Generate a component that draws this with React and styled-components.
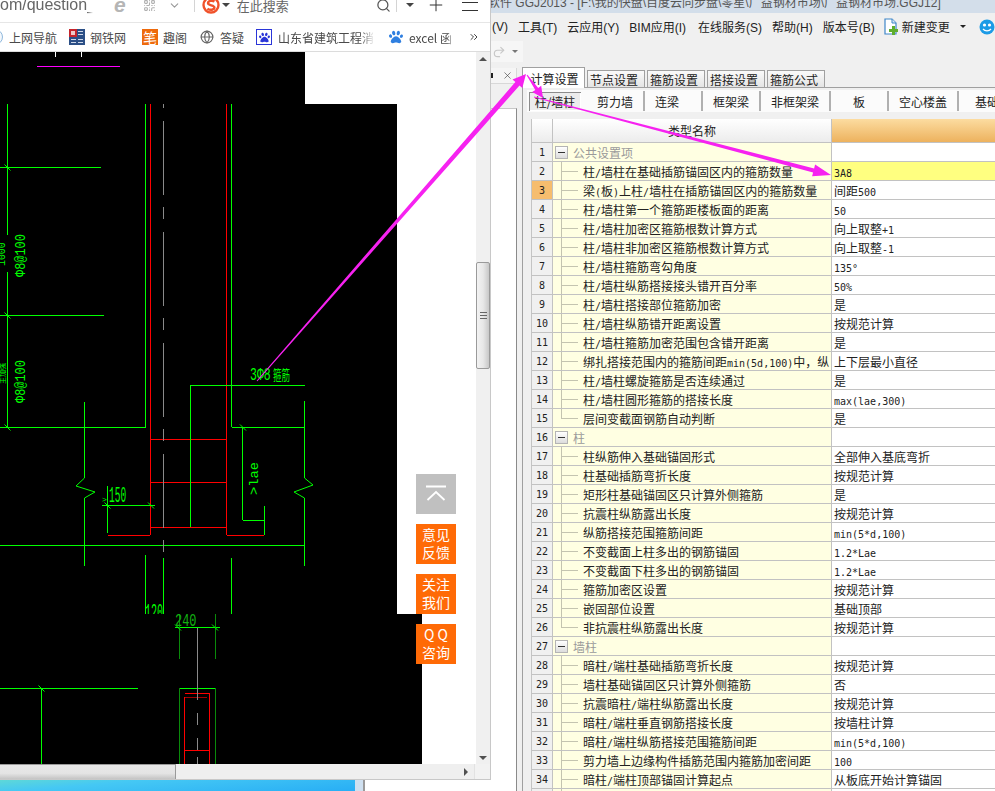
import React from "react";
import styled, { createGlobalStyle } from "styled-components";
import { ChevronDown, QrCode, Search, Plus, Globe, X, ChevronsRight, Redo2 } from "lucide-react";
import { FaPaw } from "react-icons/fa";

const Global = createGlobalStyle`
  html, body { margin: 0; padding: 0; background: #fff; }
  * { box-sizing: border-box; }
`;

const CJK = `"Noto Sans CJK SC", "Liberation Sans", sans-serif`;
const UI = `"Liberation Sans", "Noto Sans CJK SC", sans-serif`;

const Page = styled.div`
  position: relative;
  width: 995px;
  height: 791px;
  overflow: hidden;
  display: flex;
  font-family: ${CJK};
  font-size: 12px;
  color: #222;
`;

/* ---------- browser window ---------- */
const LeftColumn = styled.div`
  width: 491px;
  flex: none;
  display: flex;
  flex-direction: column;
`;
const BrowserWindow = styled.div`
  height: 780px;
  flex: none;
  display: flex;
  flex-direction: column;
  background: #fff;
  border-right: 1px solid #c8c8c8;
  border-bottom: 1px solid #c8c8c8;
`;
const AddressBar = styled.div`
  height: 23px;
  flex: none;
  display: flex;
  align-items: center;
  padding-bottom: 12px;
  border-bottom: 1px solid #e6e6e6;
  overflow: hidden;
  color: #666;
`;
const Url = styled.div`
  width: 93px;
  flex: none;
  font-family: ${UI};
  font-size: 16px;
  white-space: nowrap;
  overflow: hidden;
  color: #666;
  mask-image: linear-gradient(90deg, #000 94%, transparent);
`;
const Slot = styled.div`
  flex: none;
  display: flex;
  align-items: center;
  margin-left: ${(p) => p.$ml}px;
`;
const IeGlyph = styled.span`
  font-family: ${UI};
  font-weight: bold;
  font-style: italic;
  font-size: 21px;
  line-height: 12px;
  color: #b5b5b5;
`;
const BarDivider = styled.div`
  width: 1px;
  height: 14px;
  flex: none;
  background: #d4d4d4;
  margin-left: ${(p) => p.$ml}px;
`;
const Caret = styled.div`
  width: 0;
  height: 0;
  flex: none;
  margin-left: ${(p) => p.$ml}px;
  border-left: 4px solid transparent;
  border-right: 4px solid transparent;
  border-top: 4px solid #444;
`;
const SearchText = styled.div`
  flex: none;
  margin-left: ${(p) => p.$ml}px;
  font-size: 13px;
  color: #666;
  white-space: nowrap;
`;
const Hamburger = styled.div`
  width: 16px;
  height: 9px;
  flex: none;
  margin-left: ${(p) => p.$ml}px;
  margin-top: 2px;
  border-top: 1px solid #333;
  border-bottom: 1px solid #333;
`;
const Bookmarks = styled.div`
  height: 29px;
  flex: none;
  display: flex;
  align-items: center;
  border-bottom: 1px solid #dcdcdc;
  overflow: hidden;
  color: #444;
`;
const Mark = styled.span`
  flex: none;
  margin-left: ${(p) => p.$ml}px;
  width: ${(p) => p.$w}px;
  font-size: 12px;
  white-space: nowrap;
  overflow: hidden;
  color: #4a4a4a;
  ${(p) => p.$fade && "mask-image: linear-gradient(90deg, #000 85%, transparent);"}
`;
const BlockIcon = styled.div`
  width: 16px;
  height: 16px;
  flex: none;
  margin-left: ${(p) => p.$ml}px;
  display: flex;
  align-items: center;
  justify-content: center;
  color: #fff;
  font-size: 14px;
  line-height: 16px;
  background: ${(p) => p.$bg};
  border: ${(p) => p.$border || "none"};
`;
const ViewRow = styled.div`
  flex: 1;
  min-height: 0;
  display: flex;
`;
const Viewport = styled.div`
  position: relative;
  flex: 1;
  background: #fff;
  overflow: hidden;
`;
const DrawingSvg = styled.svg`
  display: block;
`;
const FloatColumn = styled.div`
  position: absolute;
  left: 416px;
  top: 422px;
  width: 40px;
  display: flex;
  flex-direction: column;
  gap: 10px;
`;
const FloatTop = styled.div`
  height: 40px;
  background: #c0c0c0;
  display: flex;
  align-items: center;
  justify-content: center;
`;
const FloatButton = styled.div`
  height: 40px;
  background: #ff6a06;
  color: #fff;
  font-size: 14px;
  line-height: 18px;
  text-align: center;
  padding-top: 1px;
`;
const VScroll = styled.div`
  width: 14px;
  flex: none;
  display: flex;
  flex-direction: column;
  align-items: stretch;
  background: #f0f0f0;
`;
const ScrollArrowBox = styled.div`
  height: 13px;
  flex: none;
  display: flex;
  align-items: center;
  justify-content: center;
`;
const TriUp = styled.div`
  border-left: 4px solid transparent;
  border-right: 4px solid transparent;
  border-bottom: 4px solid #505050;
`;
const TriDown = styled.div`
  border-left: 4px solid transparent;
  border-right: 4px solid transparent;
  border-top: 4px solid #505050;
`;
const TriRight = styled.div`
  border-top: 4px solid transparent;
  border-bottom: 4px solid transparent;
  border-left: 4px solid #505050;
`;
const VTrack = styled.div`
  flex: 1;
  padding-top: 197px;
`;
const VThumb = styled.div`
  height: 107px;
  border: 1px solid #9a9a9a;
  border-radius: 2px;
  background: linear-gradient(90deg, #f2f2f2, #e8e8e8 50%, #c8c8c8);
  display: flex;
  align-items: center;
  justify-content: center;
`;
const Grip = styled.div`
  width: 7px;
  height: 7px;
  border-top: 1px solid #666;
  border-bottom: 1px solid #666;
  background: linear-gradient(#666, #666) 0 50% / 100% 1px no-repeat;
`;
const HScroll = styled.div`
  height: 15px;
  flex: none;
  display: flex;
  align-items: center;
  background: #efefef;
`;
const HThumb = styled.div`
  width: 176px;
  height: 15px;
  flex: none;
  border-top: 1px solid #9a9a9a;
  border-right: 1px solid #9a9a9a;
  background: linear-gradient(#e8e8e8, #e4e4e4 60%, #c4c4c4);
`;
const HTrack = styled.div`
  flex: 1;
  display: flex;
  justify-content: flex-end;
  padding-right: 6px;
`;
const HCorner = styled.div`
  width: 16px;
  height: 15px;
  flex: none;
  background: #f2f2f2;
  border-left: 1px solid #e2e2e2;
`;
const DesktopStrip = styled.div`
  flex: 1;
  display: flex;
`;
const Wallpaper = styled.div`
  width: 355px;
  flex: none;
  background: linear-gradient(175deg, #5ed8d8 0%, #45c8f4 30%, #28aef5 100%);
`;
const OtherWindowEdge = styled.div`
  width: 10px;
  flex: none;
  background: #cfe0f0;
  border-right: 2px solid #9a9a9a;
`;
const OtherWindowBody = styled.div`
  flex: 1;
  background: #fff;
`;

/* ---------- application ---------- */
const AppColumn = styled.div`
  flex: 1;
  min-width: 0;
  display: flex;
  flex-direction: column;
  background: #f0f0f0;
`;
const TitleBar = styled.div`
  height: 13px;
  flex: none;
  overflow: hidden;
  background: #d3deea;
  color: #555;
  font-size: 12px;
  line-height: 13px;
  white-space: nowrap;
  display: flex;
  align-items: center;
  font-family: ${UI};
`;
const TitleText = styled.div`
  margin: -7px 0 0 -3px;
`;
const MenuBar = styled.div`
  height: 27px;
  flex: none;
  display: flex;
  align-items: center;
  gap: 10px;
  padding-left: 1px;
  white-space: nowrap;
  overflow: hidden;
  font-family: ${UI};
  font-size: 12px;
  color: #222;
`;
const MenuItem = styled.span`
  flex: none;
  margin-left: ${(p) => p.$ml || 0}px;
`;
const QuickBar = styled.div`
  height: 25px;
  flex: none;
  display: flex;
  align-items: flex-start;
`;
const QuickGroup = styled.div`
  width: 32px;
  height: 21px;
  margin-top: 1px;
  display: flex;
  align-items: center;
  padding-left: 1px;
  gap: 6px;
  background: #f6f6f6;
  color: #c4c4c4;
`;
const SmallCaret = styled.div`
  flex: none;
  border-left: 3px solid transparent;
  border-right: 3px solid transparent;
  border-top: 3px solid ${(p) => p.$c || "#777"};
`;
const Workspace = styled.div`
  flex: 1;
  min-height: 0;
  display: flex;
`;
const SidePanel = styled.div`
  width: 26px;
  flex: none;
  display: flex;
  flex-direction: column;
  padding-top: 3px;
`;
const SideHeader = styled.div`
  height: 16px;
  flex: none;
  display: flex;
  align-items: center;
  justify-content: space-between;
  background: #f5f5f5;
  border-bottom: 1px solid #d8d8d8;
  border-right: 1px solid #d8d8d8;
  padding-right: 3px;
`;
const PinStub = styled.div`
  width: 2px;
  height: 5px;
  background: #222;
`;
const SideBody = styled.div`
  flex: 1;
  margin-top: 24px;
  background: #fff;
  border-right: 1px solid #8a8a8a;
  border-top: 1px solid #c8c8c8;
`;
const MainPanel = styled.div`
  flex: 1;
  min-width: 0;
  margin-left: 5px;
  display: flex;
  flex-direction: column;
`;
const TabStrip = styled.div`
  height: 23px;
  flex: none;
  display: flex;
  align-items: flex-end;
  gap: 2px;
  position: relative;
  z-index: 1;
`;
const Tab = styled.div`
  width: ${(p) => (p.$active ? 63 : 58)}px;
  height: ${(p) => (p.$active ? 21 : 18)}px;
  flex: none;
  display: flex;
  align-items: center;
  justify-content: center;
  padding-left: ${(p) => (p.$active ? 2 : 0)}px;
  padding-right: ${(p) => (p.$active ? 0 : 4)}px;
  background: ${(p) =>
    p.$active ? "#fff" : "linear-gradient(#fafafa, #e4e4e4)"};
  border: 1px solid #a0a0a0;
  border-bottom: ${(p) => (p.$active ? "none" : "1px solid #a0a0a0")};
  color: #222;
`;
const TabBody = styled.div`
  flex: 1;
  min-height: 0;
  display: flex;
  flex-direction: column;
  margin-top: -1px;
  border-left: 1px solid #a0a0a0;
  border-top: 1px solid #a0a0a0;
  padding-top: 2px;
  padding-left: 4px;
`;
const SubBar = styled.div`
  height: 22px;
  flex: none;
  display: flex;
  align-items: center;
  background: #fbfbfb;
  padding-left: 2px;
  white-space: nowrap;
  overflow: hidden;
`;
const SubTab = styled.div`
  width: ${(p) => p.$w}px;
  height: ${(p) => (p.$active ? 19 : 20)}px;
  flex: none;
  display: flex;
  align-items: center;
  justify-content: center;
  padding-right: ${(p) => p.$pr || 0}px;
  border-right: 2px solid ${(p) => (p.$active ? "transparent" : "#b0b0b0")};
  ${(p) =>
    p.$active &&
    `
    background: #ececec;
    box-shadow: inset 1px 1px 0 #8c8c8c, inset -1px -1px 0 #fff;
    margin-right: 6px;
    border-right: none;
  `}
`;
const Grid = styled.div`
  flex: 1;
  min-height: 0;
  margin: 7px 0 0 4px;
  overflow: hidden;
  background: #fff;
  border-left: 1px solid #c4c4c4;
`;
const GridRow = styled.div`
  display: grid;
  grid-template-columns: 21px 279px 1fr;
  height: 19px;
  border-bottom: 1px solid #c2c2c2;
`;
const HeaderRow = styled(GridRow)`
  height: 24px;
`;
const HeadNum = styled.div`
  background: linear-gradient(#fff, #ececec);
  border-right: 1px solid #c2c2c2;
`;
const HeadName = styled.div`
  background: linear-gradient(#fff, #ececec);
  border-right: 1px solid #c2c2c2;
  display: flex;
  align-items: center;
  justify-content: center;
`;
const HeadValue = styled.div`
  background: linear-gradient(#fcdca0, #edb25e);
`;
const NumCell = styled.div`
  display: flex;
  align-items: center;
  justify-content: center;
  background: ${(p) => (p.$hot ? "#f6bd6e" : "#f0f0f0")};
  border-right: 1px solid #c2c2c2;
  color: #222;
`;
const NameCell = styled.div`
  display: flex;
  align-items: center;
  background: #ffffe2;
  border-right: 1px solid #c2c2c2;
  white-space: nowrap;
  overflow: hidden;
  color: #222;
`;
const TreeGuide = styled.div`
  width: 17px;
  height: 100%;
  flex: none;
  margin: 0 5px 0 8px;
  background:
    linear-gradient(#c4c4b0, #c4c4b0) 0 0 / 1px ${(p) => (p.$last ? "50%" : "100%")} no-repeat,
    linear-gradient(#c4c4b0, #c4c4b0) 0 50% / 100% 1px no-repeat;
`;
const Toggle = styled.div`
  width: 13px;
  height: 13px;
  flex: none;
  margin: 0 5px 0 2px;
  border: 1px solid #b4b4b4;
  background: linear-gradient(#fff, #dcdcdc);
  display: flex;
  align-items: center;
  justify-content: center;
`;
const ToggleBar = styled.div`
  width: 7px;
  height: 1px;
  background: #333;
`;
const GroupLabel = styled.span`
  color: #9a9a9a;
`;
const ValueCell = styled.div`
  display: flex;
  align-items: center;
  padding-left: 2px;
  white-space: nowrap;
  overflow: hidden;
  background: ${(p) => (p.$hot ? "#ffff80" : "#fff")};
  color: #222;
`;
const Latin = styled.span`
  font-family: "DejaVu Sans Mono", "Liberation Mono", monospace;
  font-size: 10px;
`;
const ArrowOverlay = styled.svg`
  position: absolute;
  left: 0;
  top: 0;
  pointer-events: none;
  z-index: 5;
`;
const SteelSvg = styled.svg`
  flex: none;
  margin-left: 12px;
`;
const EdgeGlobeSvg = styled.svg`
  flex: none;
`;
const NewFileSvg = styled.svg`
  flex: none;
  margin-left: -1px;
`;
const FaceSvg = styled.svg`
  flex: none;
  margin-left: 3px;
`;

/* ---------- data ---------- */
const GREEN = "#00ff00";
const RED = "#ff0000";
const DARK = "#0a8a0a";
const GREY = "#8a8a8a";

const cadLines = [
  [55.5, 52, 55.5, 57, "#fff"],
  [81.5, 52, 81.5, 57, "#fff"],
  [37, 66.5, 120, 66.5, "#ff00ff"],
  [7.5, 104, 7.5, 235, GREEN],
  [7.5, 272, 7.5, 427, GREEN],
  [0, 167.5, 101, 167.5, GREEN],
  [0, 315.5, 104, 315.5, GREEN],
  [0, 427.5, 145.5, 427.5, GREEN],
  [145.5, 104, 145.5, 427, GREEN],
  [231.5, 104, 231.5, 427, GREEN],
  [231.5, 427.5, 304, 427.5, GREEN],
  [150.5, 104, 150.5, 535, RED],
  [226.5, 104, 226.5, 535, RED],
  [150, 439.5, 227, 439.5, RED],
  [150, 482.5, 227, 482.5, RED],
  [150, 527.5, 227, 527.5, RED],
  [108, 535.5, 150, 535.5, RED],
  [227, 535.5, 264, 535.5, RED],
  [190.5, 385.5, 305, 385.5, GREEN],
  [190.5, 385, 190.5, 527, GREEN],
  [84.5, 402, 84.5, 478, GREEN],
  [84.5, 498, 84.5, 566, GREEN],
  [304.5, 401, 304.5, 478, GREEN],
  [304.5, 498, 304.5, 566, GREEN],
  [242.5, 427, 242.5, 520, GREEN],
  [242.5, 520.5, 264, 520.5, GREEN],
  [264.5, 506, 264.5, 535, GREEN],
  [0, 545.5, 304, 545.5, GREEN],
  [107.5, 486, 107.5, 533, GREEN],
  [102, 505.5, 155, 505.5, GREEN],
  [145.5, 555, 145.5, 614, GREEN],
  [163.5, 558, 163.5, 614, GREEN],
  [231.5, 558, 231.5, 614, GREEN],
  [175, 627.5, 220, 627.5, GREEN],
  [179.5, 614, 179.5, 659, DARK],
  [215, 614, 215, 659, DARK],
  [179.5, 688.5, 215, 688.5, GREEN],
  [179.5, 688, 179.5, 764, DARK],
  [215, 688, 215, 764, DARK],
  [184.5, 693.5, 209.5, 693.5, RED],
  [184.5, 697.5, 207, 697.5, "#a00000"],
  [184.5, 697, 184.5, 764, RED],
  [209.5, 693, 209.5, 764, RED],
  [184.5, 750.5, 209.5, 750.5, RED],
  [0, 688.5, 138, 688.5, GREEN],
  [41.5, 688, 41.5, 764, GREEN],
  [163.5, 104, 163.5, 108, GREY],
  [197.5, 628, 197.5, 700, GREY],
  [197.5, 713, 197.5, 725, GREY],
  [197.5, 738, 197.5, 750, GREY],
  [197.5, 757, 197.5, 764, GREY],
];

const cadPolys = [
  "84.5,478 76,486 95,492 84.5,498",
  "304.5,478 313,485 294,492 304.5,498",
];

const ticks = [
  [7.5, 167.5],
  [7.5, 315.5],
  [7.5, 427.5],
  [107.5, 505.5],
  [151, 505.5],
  [243, 427.5],
  [178, 627.5],
  [215, 627.5],
  [41.5, 688.5],
];

const cadLabels = [
  { x: 250, y: 380, t: "3Φ8", size: 14, sx: 0.82, sy: 1.3 },
  { x: 273, y: 380, t: "箍筋", size: 10, sx: 0.85, sy: 1.4 },
  { x: 109, y: 502, t: "150", size: 14, sx: 0.68, sy: 1.55 },
  { x: 102, y: 502, t: ">", size: 8 },
  { x: 145, y: 619, t: "120", size: 14, sx: 0.72, sy: 1.55, clip: true },
  { x: 175, y: 626, t: "240", size: 14, sx: 0.85, sy: 1.3, dim: true },
];

const cadVertical = [
  { x: 25, y: 277, t: "Φ8@100", size: 14, sx: 0.85 },
  { x: 25, y: 403, t: "Φ8@100", size: 14, sx: 0.85 },
  { x: 5, y: 266, t: "1000", size: 11, sx: 0.9 },
  { x: 5, y: 384, t: "主加强", size: 7 },
  { x: 258, y: 495, t: ">lae", size: 12, sx: 1.15 },
];

const group = (label) => ({ group: true, name: label });
const item = (name, value, last) => ({ name, value, last });

const rows = [
  group("公共设置项"),
  item("柱/墙柱在基础插筋锚固区内的箍筋数量", "3A8"),
  item("梁(板)上柱/墙柱在插筋锚固区内的箍筋数量", "间距500"),
  item("柱/墙柱第一个箍筋距楼板面的距离", "50"),
  item("柱/墙柱加密区箍筋根数计算方式", "向上取整+1"),
  item("柱/墙柱非加密区箍筋根数计算方式", "向上取整-1"),
  item("柱/墙柱箍筋弯勾角度", "135°"),
  item("柱/墙柱纵筋搭接接头错开百分率", "50%"),
  item("柱/墙柱搭接部位箍筋加密", "是"),
  item("柱/墙柱纵筋错开距离设置", "按规范计算"),
  item("柱/墙柱箍筋加密范围包含错开距离", "是"),
  item("绑扎搭接范围内的箍筋间距min(5d,100)中，纵", "上下层最小直径"),
  item("柱/墙柱螺旋箍筋是否连续通过", "是"),
  item("柱/墙柱圆形箍筋的搭接长度", "max(lae,300)"),
  item("层间变截面钢筋自动判断", "是", true),
  group("柱"),
  item("柱纵筋伸入基础锚固形式", "全部伸入基底弯折"),
  item("柱基础插筋弯折长度", "按规范计算"),
  item("矩形柱基础锚固区只计算外侧箍筋", "是"),
  item("抗震柱纵筋露出长度", "按规范计算"),
  item("纵筋搭接范围箍筋间距", "min(5*d,100)"),
  item("不变截面上柱多出的钢筋锚固", "1.2*Lae"),
  item("不变截面下柱多出的钢筋锚固", "1.2*Lae"),
  item("箍筋加密区设置", "按规范计算"),
  item("嵌固部位设置", "基础顶部"),
  item("非抗震柱纵筋露出长度", "按规范计算", true),
  group("墙柱"),
  item("暗柱/端柱基础插筋弯折长度", "按规范计算"),
  item("墙柱基础锚固区只计算外侧箍筋", "否"),
  item("抗震暗柱/端柱纵筋露出长度", "按规范计算"),
  item("暗柱/端柱垂直钢筋搭接长度", "按墙柱计算"),
  item("暗柱/端柱纵筋搭接范围箍筋间距", "min(5*d,100)"),
  item("剪力墙上边缘构件插筋范围内箍筋加密间距", "100"),
  item("暗柱/端柱顶部锚固计算起点", "从板底开始计算锚固"),
];

const Mixed = ({ text }) =>
  text
    .split(/([\x20-\x7e°]+)/)
    .map((part, i) =>
      i % 2 ? <Latin key={i}>{part}</Latin> : <React.Fragment key={i}>{part}</React.Fragment>
    );

const tapered = (x1, y1, x2, y2, w1, w2, hl, hw) => {
  const len = Math.hypot(x2 - x1, y2 - y1);
  const ux = (x2 - x1) / len;
  const uy = (y2 - y1) / len;
  const nx = -uy;
  const ny = ux;
  const bx = x2 - ux * hl;
  const by = y2 - uy * hl;
  const pts = [
    [x1 + (nx * w1) / 2, y1 + (ny * w1) / 2],
    [bx + (nx * w2) / 2, by + (ny * w2) / 2],
    [bx + (nx * hw) / 2, by + (ny * hw) / 2],
    [x2, y2],
    [bx - (nx * hw) / 2, by - (ny * hw) / 2],
    [bx - (nx * w2) / 2, by - (ny * w2) / 2],
    [x1 - (nx * w1) / 2, y1 - (ny * w1) / 2],
  ];
  return pts.map((p) => p.map((v) => v.toFixed(1)).join(",")).join(" ");
};

const arrows = [
  [257, 381, 526, 74, 1, 5.5, 13, 13],
  [527, 75, 543, 98, 1, 3.5, 11, 11],
  [534, 97, 831, 175, 1, 4, 18, 12],
];

const SogouIcon = () => (
  <svg width="18" height="18" viewBox="0 0 18 18">
    <circle cx="9" cy="9" r="7.5" fill="#fff" stroke="#f0522b" strokeWidth="2.4" />
    <path d="M12.5 5.5C10 4 6 4.8 6 7c0 3 6.4 1.6 6.4 4.6 0 2.2-4 3-7 1.2" fill="none" stroke="#f0522b" strokeWidth="2.4" />
  </svg>
);

const SteelIcon = () => (
  <SteelSvg width="16" height="16" viewBox="0 0 16 16">
    <rect width="16" height="16" fill="#2c4f86" />
    <rect width="8" height="8" fill="#c6252c" />
    <rect x="2" y="2" width="4" height="4" fill="#f0c8c8" />
    <rect x="9" y="2" width="5" height="1" fill="#cfd8e8" />
    <rect x="9" y="5" width="5" height="1" fill="#cfd8e8" />
    <rect x="2" y="10" width="5" height="1" fill="#cfd8e8" />
    <rect x="2" y="13" width="5" height="1" fill="#cfd8e8" />
    <rect x="9" y="10" width="5" height="1" fill="#cfd8e8" />
    <rect x="9" y="13" width="5" height="1" fill="#cfd8e8" />
  </SteelSvg>
);

const NewFileIcon = () => (
  <NewFileSvg width="14" height="17" viewBox="0 0 14 17">
    <path d="M1 1h7l4 4v11H1z" fill="#fff" stroke="#3f86c8" strokeWidth="1.2" />
    <path d="M8 1v4h4" fill="#d8e8f6" stroke="#3f86c8" />
    <path d="M8 8h3v3h3v3h-3v3H8v-3H5v-3h3z" fill="#5fae2e" />
  </NewFileSvg>
);

const FaceIcon = () => (
  <FaceSvg width="16" height="16" viewBox="0 0 16 16">
    <circle cx="8" cy="8" r="7.5" fill="#1c9be6" />
    <circle cx="5.5" cy="6" r="1.6" fill="#fff" />
    <circle cx="10.5" cy="6" r="1.6" fill="#fff" />
    <path d="M4 10c2 2.4 6 2.4 8 0" stroke="#fff" strokeWidth="1.2" fill="none" />
  </FaceSvg>
);

const Drawing = () => (
  <DrawingSvg width="477" height="712" viewBox="0 52 477 712" shapeRendering="crispEdges">
    <defs>
      <clipPath id="above614">
        <rect x="0" y="52" width="477" height="562" />
      </clipPath>
    </defs>
    <polygon points="0,52 305,52 305,104 397,104 397,614 422,614 422,764 0,764" fill="#000" />
    {cadLines.map(([x1, y1, x2, y2, c], i) => (
      <line key={i} x1={x1} y1={y1} x2={x2} y2={y2} stroke={c} strokeWidth="1" />
    ))}
    <line x1="163.5" y1="121" x2="163.5" y2="552" stroke={GREY} strokeDasharray="74 12 12 13" />
    {cadPolys.map((p) => (
      <polyline key={p} points={p} fill="none" stroke={GREEN} shapeRendering="auto" />
    ))}
    {ticks.map(([x, y]) => (
      <line key={`${x}-${y}`} x1={x - 3} y1={y - 3} x2={x + 3} y2={y + 3} stroke={GREEN} shapeRendering="auto" />
    ))}
    <g fill={GREEN} fontFamily={`"Liberation Mono", "Noto Sans CJK SC", monospace`}>
      {cadLabels.map((l) => (
        <g key={l.t} clipPath={l.clip ? "url(#above614)" : undefined}>
          <text
            fontSize={l.size}
            transform={`translate(${l.x} ${l.y}) scale(${l.sx || 1} ${l.sy || 1})`}
            fill={l.dim ? "#12b012" : GREEN}
          >
            {l.t}
          </text>
        </g>
      ))}
      {cadVertical.map((l) => (
        <text
          key={`${l.t}${l.y}`}
          fontSize={l.size}
          transform={`translate(${l.x} ${l.y}) rotate(-90) scale(${l.sx || 1} 1)`}
        >
          {l.t}
        </text>
      ))}
    </g>
  </DrawingSvg>
);

export default function App() {
  return (
    <Page>
      <Global />
      <LeftColumn>
        <BrowserWindow>
          <AddressBar>
            <Url>om/question_2</Url>
            <Slot $ml={21}><IeGlyph>e</IeGlyph></Slot>
            <Slot $ml={17}><QrCode size={13} color="#b0b0b0" /></Slot>
            <Slot $ml={12}><ChevronDown size={13} color="#999" /></Slot>
            <BarDivider $ml={13} />
            <Slot $ml={7}><SogouIcon /></Slot>
            <Caret $ml={2} />
            <SearchText $ml={7}>在此搜索</SearchText>
            <Slot $ml={87}><Search size={15} color="#555" /></Slot>
            <BarDivider $ml={5} />
            <Caret $ml={9} />
            <Slot $ml={12}><Plus size={20} color="#333" strokeWidth={1.2} /></Slot>
            <Hamburger $ml={16} />
          </AddressBar>
          <Bookmarks>
            <EdgeGlobeSvg width="3" height="16" viewBox="0 0 3 16">
              <circle cx="-5" cy="8" r="7.5" fill="#f4f8fc" stroke="#8fb8dc" />
            </EdgeGlobeSvg>
            <Mark $ml={6} $w={48}>上网导航</Mark>
            <SteelIcon />
            <Mark $ml={5} $w={36}>钢铁网</Mark>
            <BlockIcon $ml={16} $bg="#ee6a0c">笔</BlockIcon>
            <Mark $ml={5} $w={24}>趣阁</Mark>
            <Slot $ml={13}><Globe size={14} color="#666" /></Slot>
            <Mark $ml={6} $w={24}>答疑</Mark>
            <BlockIcon $ml={12} $bg="#fff" $border="1px solid #2a35d8"><FaPaw size={11} color="#2a35d8" /></BlockIcon>
            <Mark $ml={6} $w={97} $fade>山东省建筑工程消</Mark>
            <Slot $ml={14}><FaPaw size={14} color="#2f7fe0" /></Slot>
            <Mark $ml={6} $w={45} $fade>excel 函</Mark>
            <Slot $ml={14}><ChevronsRight size={12} color="#444" /></Slot>
          </Bookmarks>
          <ViewRow>
            <Viewport>
              <Drawing />
              <FloatColumn>
                <FloatTop>
                  <svg width="22" height="18" viewBox="0 0 22 18">
                    <path d="M1 1.5h20M2.5 15L11 7l8.5 8" fill="none" stroke="#fff" strokeWidth="1.8" />
                  </svg>
                </FloatTop>
                <FloatButton>意见<br />反馈</FloatButton>
                <FloatButton>关注<br />我们</FloatButton>
                <FloatButton>Q Q<br />咨询</FloatButton>
              </FloatColumn>
            </Viewport>
            <VScroll>
              <ScrollArrowBox><TriUp /></ScrollArrowBox>
              <VTrack>
                <VThumb><Grip /></VThumb>
              </VTrack>
              <ScrollArrowBox><TriDown /></ScrollArrowBox>
            </VScroll>
          </ViewRow>
          <HScroll>
            <HThumb />
            <HTrack><TriRight /></HTrack>
            <HCorner />
          </HScroll>
        </BrowserWindow>
        <DesktopStrip>
          <Wallpaper />
          <OtherWindowEdge />
          <OtherWindowBody />
        </DesktopStrip>
      </LeftColumn>

      <AppColumn>
        <TitleBar>
          <TitleText>软件 GGJ2013 - [F:\我的快盘\百度云同步盘\零星\广益钢材市场\广益钢材市场.GGJ12]</TitleText>
        </TitleBar>
        <MenuBar>
          <MenuItem>(V)</MenuItem>
          <MenuItem>工具(T)</MenuItem>
          <MenuItem>云应用(Y)</MenuItem>
          <MenuItem>BIM应用(I)</MenuItem>
          <MenuItem $ml={2}>在线服务(S)</MenuItem>
          <MenuItem>帮助(H)</MenuItem>
          <MenuItem>版本号(B)</MenuItem>
          <NewFileIcon />
          <MenuItem $ml={-6}>新建变更</MenuItem>
          <SmallCaret $c="#222" />
          <FaceIcon />
          <MenuItem $ml={-7}>联</MenuItem>
        </MenuBar>
        <QuickBar>
          <QuickGroup>
            <Redo2 size={14} color="#c8c8c8" />
            <SmallCaret />
          </QuickGroup>
        </QuickBar>
        <Workspace>
          <SidePanel>
            <SideHeader>
              <PinStub />
              <X size={11} color="#444" strokeWidth={1.4} />
            </SideHeader>
            <SideBody />
          </SidePanel>
          <MainPanel>
            <TabStrip>
              <Tab $active>计算设置</Tab>
              <Tab>节点设置</Tab>
              <Tab>箍筋设置</Tab>
              <Tab>搭接设置</Tab>
              <Tab>箍筋公式</Tab>
            </TabStrip>
            <TabBody>
              <SubBar>
                <SubTab $active $w={52}>柱/墙柱</SubTab>
                <SubTab $w={58}>剪力墙</SubTab>
                <SubTab $w={58} $pr={12}>连梁</SubTab>
                <SubTab $w={58}>框架梁</SubTab>
                <SubTab $w={70}>非框架梁</SubTab>
                <SubTab $w={58}>板</SubTab>
                <SubTab $w={70}>空心楼盖</SubTab>
                <SubTab $w={58}>基础</SubTab>
              </SubBar>
              <Grid>
                <HeaderRow>
                  <HeadNum />
                  <HeadName>类型名称</HeadName>
                  <HeadValue />
                </HeaderRow>
                {rows.map((r, i) => (
                  <GridRow key={i}>
                    <NumCell $hot={i === 2}><Latin>{i + 1}</Latin></NumCell>
                    <NameCell>
                      {r.group ? (
                        <>
                          <Toggle><ToggleBar /></Toggle>
                          <GroupLabel>{r.name}</GroupLabel>
                        </>
                      ) : (
                        <>
                          <TreeGuide $last={r.last} />
                          <span><Mixed text={r.name} /></span>
                        </>
                      )}
                    </NameCell>
                    <ValueCell $hot={i === 1}>
                      {r.value && <span><Mixed text={r.value} /></span>}
                    </ValueCell>
                  </GridRow>
                ))}
                <GridRow>
                  <NumCell />
                  <NameCell><TreeGuide /></NameCell>
                  <ValueCell />
                </GridRow>
              </Grid>
            </TabBody>
          </MainPanel>
        </Workspace>
      </AppColumn>

      <ArrowOverlay width="995" height="791" viewBox="0 0 995 791">
        {arrows.map((a, i) => (
          <polygon key={i} points={tapered(...a)} fill="#f622f0" />
        ))}
      </ArrowOverlay>
    </Page>
  );
}
